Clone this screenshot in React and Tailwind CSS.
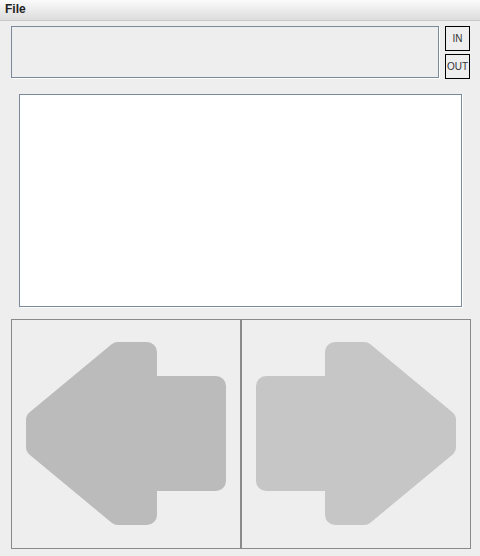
export default function App() {
  return (
    <div className="w-[480px] h-[556px] bg-[#eeeeee] font-['Liberation_Sans',sans-serif] text-[#222]">
      {/* menu bar */}
      <div className="h-[21px] border-b border-[#c8c8c8] bg-gradient-to-b from-[#fbfbfb] to-[#dcdcdc] px-[5px] text-[12px] font-bold leading-[18px]">
        File
      </div>

      <div className="flex pl-[11px] pt-[5px] gap-[6px]">
        <div className="w-[428px] h-[52px] border border-[#7a8a99] shadow-[1px_1px_0_#ffffff]" />
        <div className="flex flex-col gap-[3px]">
          <button className="w-[25px] h-[25px] border border-black text-[10px] leading-none flex items-center justify-center text-[#333]">
            IN
          </button>
          <button className="w-[25px] h-[25px] border border-black text-[10px] leading-none flex items-center justify-center text-[#333]">
            OUT
          </button>
        </div>
      </div>

      <div className="ml-[19px] mt-[15px] w-[443px] h-[213px] bg-white border border-[#7a8a99] shadow-[1px_1px_0_#ffffff]" />

      <div className="ml-[11px] mt-[12px] flex">
        <button className="w-[230px] h-[230px] border border-[#8a8a8a] p-0">
          <svg width="228" height="228" viewBox="12 320 228 228" className="block">
            <polygon
              points="36,420 118,352 147,352 147,386 216,386 216,481 147,481 147,515 118,515 36,447"
              fill="#bbbbbb"
              stroke="#bbbbbb"
              strokeWidth="20"
              strokeLinejoin="round"
            />
          </svg>
        </button>
        <button className="w-[230px] h-[230px] border border-[#8a8a8a] p-0">
          <svg width="228" height="228" viewBox="242 320 228 228" className="block">
            <polygon
              points="446,420 364,352 335,352 335,386 266,386 266,481 335,481 335,515 364,515 446,447"
              fill="#c6c6c6"
              stroke="#c6c6c6"
              strokeWidth="20"
              strokeLinejoin="round"
            />
          </svg>
        </button>
      </div>
    </div>
  );
}
